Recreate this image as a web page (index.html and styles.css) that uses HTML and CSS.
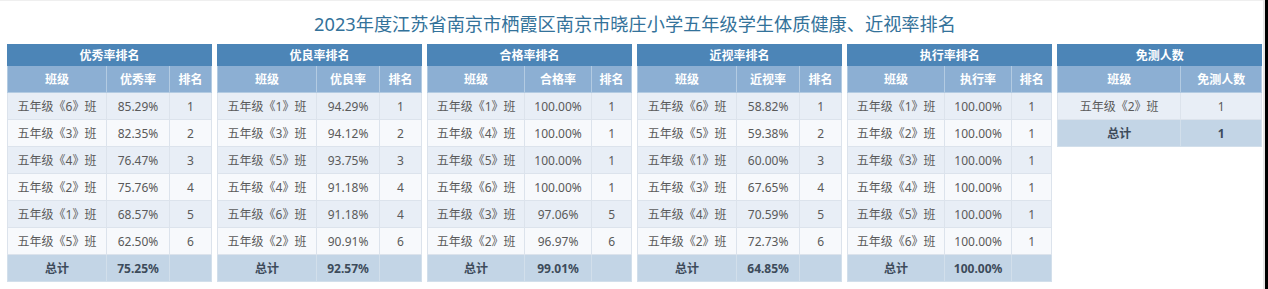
FILE: index.html
```html
<!DOCTYPE html>
<html lang="zh-CN">
<head>
<meta charset="utf-8">
<title>体质健康、近视率排名</title>
<link rel="stylesheet" href="styles.css">
</head>
<body>
<div class="page">
  <h1 class="page-title">2023年度江苏省南京市栖霞区南京市晓庄小学五年级学生体质健康、近视率排名</h1>
  <div class="tables">
    <table class="rank t-std">
      <colgroup><col class="c1"><col class="c2"><col class="c3"></colgroup>
      <thead>
        <tr class="cap"><th colspan="3">优秀率排名</th></tr>
        <tr class="hd"><th>班级</th><th>优秀率</th><th>排名</th></tr>
      </thead>
      <tbody>
        <tr><td>五年级《6》班</td><td>85.29%</td><td>1</td></tr>
        <tr><td>五年级《3》班</td><td>82.35%</td><td>2</td></tr>
        <tr><td>五年级《4》班</td><td>76.47%</td><td>3</td></tr>
        <tr><td>五年级《2》班</td><td>75.76%</td><td>4</td></tr>
        <tr><td>五年级《1》班</td><td>68.57%</td><td>5</td></tr>
        <tr><td>五年级《5》班</td><td>62.50%</td><td>6</td></tr>
        <tr class="total"><td>总计</td><td>75.25%</td><td></td></tr>
      </tbody>
    </table>
    <table class="rank t-std">
      <colgroup><col class="c1"><col class="c2"><col class="c3"></colgroup>
      <thead>
        <tr class="cap"><th colspan="3">优良率排名</th></tr>
        <tr class="hd"><th>班级</th><th>优良率</th><th>排名</th></tr>
      </thead>
      <tbody>
        <tr><td>五年级《1》班</td><td>94.29%</td><td>1</td></tr>
        <tr><td>五年级《3》班</td><td>94.12%</td><td>2</td></tr>
        <tr><td>五年级《5》班</td><td>93.75%</td><td>3</td></tr>
        <tr><td>五年级《4》班</td><td>91.18%</td><td>4</td></tr>
        <tr><td>五年级《6》班</td><td>91.18%</td><td>4</td></tr>
        <tr><td>五年级《2》班</td><td>90.91%</td><td>6</td></tr>
        <tr class="total"><td>总计</td><td>92.57%</td><td></td></tr>
      </tbody>
    </table>
    <table class="rank t-wide">
      <colgroup><col class="c1"><col class="c2"><col class="c3"></colgroup>
      <thead>
        <tr class="cap"><th colspan="3">合格率排名</th></tr>
        <tr class="hd"><th>班级</th><th>合格率</th><th>排名</th></tr>
      </thead>
      <tbody>
        <tr><td>五年级《1》班</td><td>100.00%</td><td>1</td></tr>
        <tr><td>五年级《4》班</td><td>100.00%</td><td>1</td></tr>
        <tr><td>五年级《5》班</td><td>100.00%</td><td>1</td></tr>
        <tr><td>五年级《6》班</td><td>100.00%</td><td>1</td></tr>
        <tr><td>五年级《3》班</td><td>97.06%</td><td>5</td></tr>
        <tr><td>五年级《2》班</td><td>96.97%</td><td>6</td></tr>
        <tr class="total"><td>总计</td><td>99.01%</td><td></td></tr>
      </tbody>
    </table>
    <table class="rank t-std">
      <colgroup><col class="c1"><col class="c2"><col class="c3"></colgroup>
      <thead>
        <tr class="cap"><th colspan="3">近视率排名</th></tr>
        <tr class="hd"><th>班级</th><th>近视率</th><th>排名</th></tr>
      </thead>
      <tbody>
        <tr><td>五年级《6》班</td><td>58.82%</td><td>1</td></tr>
        <tr><td>五年级《5》班</td><td>59.38%</td><td>2</td></tr>
        <tr><td>五年级《1》班</td><td>60.00%</td><td>3</td></tr>
        <tr><td>五年级《3》班</td><td>67.65%</td><td>4</td></tr>
        <tr><td>五年级《4》班</td><td>70.59%</td><td>5</td></tr>
        <tr><td>五年级《2》班</td><td>72.73%</td><td>6</td></tr>
        <tr class="total"><td>总计</td><td>64.85%</td><td></td></tr>
      </tbody>
    </table>
    <table class="rank t-wide">
      <colgroup><col class="c1"><col class="c2"><col class="c3"></colgroup>
      <thead>
        <tr class="cap"><th colspan="3">执行率排名</th></tr>
        <tr class="hd"><th>班级</th><th>执行率</th><th>排名</th></tr>
      </thead>
      <tbody>
        <tr><td>五年级《1》班</td><td>100.00%</td><td>1</td></tr>
        <tr><td>五年级《2》班</td><td>100.00%</td><td>1</td></tr>
        <tr><td>五年级《3》班</td><td>100.00%</td><td>1</td></tr>
        <tr><td>五年级《4》班</td><td>100.00%</td><td>1</td></tr>
        <tr><td>五年级《5》班</td><td>100.00%</td><td>1</td></tr>
        <tr><td>五年级《6》班</td><td>100.00%</td><td>1</td></tr>
        <tr class="total"><td>总计</td><td>100.00%</td><td></td></tr>
      </tbody>
    </table>
    <table class="rank t-two">
      <colgroup><col class="c1"><col class="c2"></colgroup>
      <thead>
        <tr class="cap"><th colspan="2">免测人数</th></tr>
        <tr class="hd"><th>班级</th><th>免测人数</th></tr>
      </thead>
      <tbody>
        <tr><td>五年级《2》班</td><td>1</td></tr>
        <tr class="total"><td>总计</td><td>1</td></tr>
      </tbody>
    </table>
  </div>
</div>
</body>
</html>
```

FILE: styles.css
```css
html {
  background: #000;
  margin: 0;
  padding: 0;
}
body {
  margin: 0;
  width: 1263px;
  min-height: 289px;
  background: #fff;
  border-right: 2px solid #e6e6e6;
  font-family: "Noto Sans", "Noto Sans CJK SC", sans-serif;
}
.page {
  padding: 0 0 0 7px;
  border-top: 1px solid #efefef;
}
.page-title {
  margin: 0;
  padding: 11px 0 8px;
  font-size: 18.2px;
  line-height: 24px;
  font-weight: normal;
  color: #33729a;
  text-align: center;
}
.tables {
  display: flex;
  align-items: flex-start;
  gap: 5px;
}
.rank {
  width: 204px;
  border-collapse: collapse;
  table-layout: fixed;
  font-size: 12px;
  color: #5a5a5a;
  flex: none;
}
.t-std .c1 { width: 99px; }
.t-std .c2 { width: 63px; }
.t-std .c3 { width: 42px; }
.t-wide .c1 { width: 97px; }
.t-wide .c2 { width: 67px; }
.t-wide .c3 { width: 40px; }
.t-two .c1 { width: 123px; }
.t-two .c2 { width: 81px; }
.rank th,
.rank td {
  padding: 0;
  text-align: center;
  vertical-align: middle;
  white-space: nowrap;
}
.rank .cap th {
  height: 20px;
  background: #4c85b7;
  color: #fff;
  font-weight: bold;
  border: 1px solid #4c85b7;
}
.rank .hd th {
  height: 26px;
  background: #8cafd3;
  color: #fff;
  font-weight: bold;
  border: 1px solid #b3cbe2;
  border-top-color: #8cafd3;
}
.rank td {
  height: 26px;
  border: 1px solid #dce3ec;
}
.rank tbody tr:nth-child(odd) td {
  background: #e8eef6;
}
.rank tbody tr:nth-child(even) td {
  background: #f7f9fc;
}
.rank tbody tr.total td {
  background: #c3d5e6;
  border-color: #d2dfeb;
  font-weight: bold;
  color: #3d4b5a;
}
```
